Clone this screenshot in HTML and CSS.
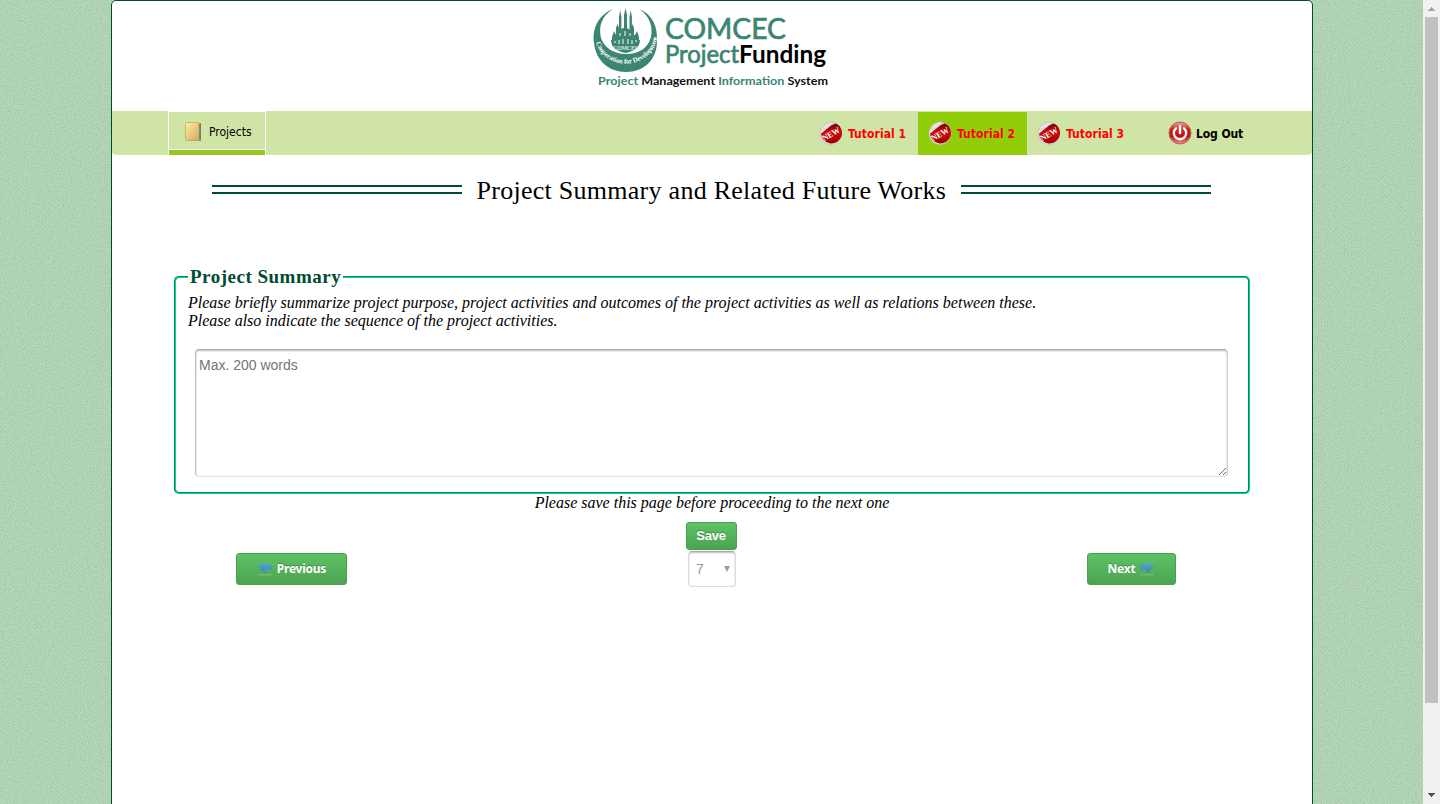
FILE: index.html
```html
<!DOCTYPE html>
<html lang="en">
<head>
<meta charset="utf-8">
<title>COMCEC Project Funding</title>
<link rel="stylesheet" href="styles.css">
</head>
<body>
<svg class="texture" width="1423" height="804" aria-hidden="true">
  <defs>
    <filter id="grain" x="0" y="0" width="100%" height="100%" color-interpolation-filters="sRGB">
      <feTurbulence type="fractalNoise" baseFrequency="0.7" numOctaves="2" seed="8"/>
      <feColorMatrix values="0 0 0 0 .43  0 0 0 0 .65  0 0 0 0 .51  .9 0 0 0 -.38"/>
    </filter>
    <pattern id="weave" width="4" height="4" patternUnits="userSpaceOnUse">
      <path d="M0 3h1v1H0zM1 2h1v1H1zM2 1h1v1H2zM3 0h1v1H3z" fill="#9fc7a7" opacity=".3"/>
    </pattern>
    <symbol id="new-badge" viewBox="0 0 24 24">
      <circle cx="12" cy="12.500" r="11" fill="#f4f0ea" stroke="#b9b5ab" stroke-width=".7"/>
      <path d="M2 12.600C7 9.600 10 4 17 2.600A10.500 10.500 0 1 1 2 12.600z" fill="url(#badge-red)"/>
      <path d="M2 8.500C4 3.500 9 .6 14 .6c-2 5-6 8-12 7.900z" fill="#e4e3e1" stroke="#aaa" stroke-width=".4"/>
      <text x="2.500" y="16" transform="rotate(-30 12 13)" textLength="19" lengthAdjust="spacingAndGlyphs" class="badge-word">NEW</text>
    </symbol>
    <linearGradient id="badge-red" x1="0" y1="0" x2="0" y2="1"><stop offset="0" stop-color="#760000"/><stop offset=".45" stop-color="#d60909"/><stop offset="1" stop-color="#950000"/></linearGradient>
    <linearGradient id="power-red" x1="0" y1="0" x2="0" y2="1"><stop offset="0" stop-color="#f4aaa2"/><stop offset=".3" stop-color="#d22a20"/><stop offset=".65" stop-color="#c01010"/><stop offset="1" stop-color="#f59690"/></linearGradient>
    <linearGradient id="book" x1="0" y1="0" x2="1" y2="1"><stop offset="0" stop-color="#fff0a0"/><stop offset="1" stop-color="#d0a95c"/></linearGradient>
    <linearGradient id="arrow-blue" x1="0" y1="0" x2="0" y2="1"><stop offset="0" stop-color="#5caed0"/><stop offset="1" stop-color="#397ec4"/></linearGradient>
    <symbol id="arrow" viewBox="0 0 16 16">
      <path d="M1 7L8 1V4.500H15V9.500H8V13z" fill="url(#arrow-blue)"/>
      <path d="M1 14h14v1.500H1z" fill="#88b98b" opacity=".65"/>
    </symbol>
  </defs>
  <rect width="1423" height="804" filter="url(#grain)"/>
  <rect width="1423" height="804" fill="url(#weave)"/>
</svg>

<div class="page">
  <header class="brand">
    <svg class="logo" width="240" height="84" viewBox="592 6 240 84" role="img">
      <defs><path id="motto" d="M595 40A31.500 30 0 0 0 657 38V20"/></defs>
      <path d="M613 9C598 15 592 29 594 43C596 61 609 72 626 72C644 72 656 60 657 43C658 26 652 14 639 9C650 16 653 27 651 37C648 48 639 54 626 54C613 54 604 47 601 38C598 26 602 16 613 9z" fill="#3c8572"/>
      <g fill="#3c8572">
        <path d="M619 31V17l1.200-7 1.200 7v14zM624 29V15l1.500-7 1.500 7v14zM629.500 31V17l1.200-7 1.200 7v14z"/>
        <path d="M616 36v-8l1.500-4 1.500 4v3q6-7 12 0v-3l1.500-4 1.500 4v8zM612 37l2-6 2 4h19l2-4 2 6v3h-27z"/>
        <path d="M611 40h29q0 10-14.500 13Q611 50 611 40z"/>
      </g>
      <path d="M615 41v2m4-3v4m4-5v5m5-5v5m4-4v4m4-4v2M620 36v-3m5 3v-5m5 5v-3" stroke="#d9e9e2" stroke-width="1.200"/>
      <text x="613" y="50" class="seal-name" textLength="26">COMCEC</text>
      <text class="motto"><textPath href="#motto" startOffset="3" textLength="84" lengthAdjust="spacingAndGlyphs">Cooperation for Development</textPath></text>
      <text x="665" y="39" class="logo-title" textLength="121" lengthAdjust="spacingAndGlyphs">COMCEC</text>
      <text x="665" y="63" class="logo-project" textLength="74" lengthAdjust="spacingAndGlyphs">Project</text>
      <text x="739" y="63" class="logo-funding" textLength="87" lengthAdjust="spacingAndGlyphs">Funding</text>
      <text x="598" y="85" class="logo-sub" textLength="230" lengthAdjust="spacingAndGlyphs"><tspan class="green">Project</tspan> Management <tspan class="green">Information</tspan> System</text>
    </svg>
  </header>

  <nav class="nav">
    <a class="projects">
      <svg width="18" height="22" viewBox="0 0 18 22"><path d="M14 2h3v18H3" fill="#83906a"/><path d="M15 3h1.500v5H15z" fill="#c5422f"/><path d="M15 8h1.500v5H15z" fill="#35918c"/><path d="M15 13h1.500v5H15z" fill="#51783b"/><rect x="1.500" y="1.500" width="13.500" height="18" rx="1" fill="url(#book)" stroke="#c4ac62" stroke-width=".8"/></svg>
      <span>Projects</span>
    </a>
    <div class="links">
      <a class="link"><svg width="24" height="24"><use href="#new-badge"/></svg><span>Tutorial 1</span></a>
      <a class="link active"><svg width="24" height="24"><use href="#new-badge"/></svg><span>Tutorial 2</span></a>
      <a class="link"><svg width="24" height="24"><use href="#new-badge"/></svg><span>Tutorial 3</span></a>
      <a class="link logout"><svg width="24" height="24" viewBox="0 0 24 24"><circle cx="12" cy="12" r="11" fill="url(#power-red)" stroke="#a9685e" stroke-width="1"/><path d="M8 7.300a6.200 6.200 0 1 0 8 0" fill="none" stroke="#fff" stroke-width="2.400" stroke-linecap="round"/><path d="M12 5v7" stroke="#fff" stroke-width="2.500" stroke-linecap="round"/></svg><span>Log Out</span></a>
    </div>
  </nav>

  <main>
    <div class="heading"><i class="rule"></i><h1>Project Summary and Related Future Works</h1><i class="rule"></i></div>
    <fieldset class="summary">
      <legend>Project Summary</legend>
      <p class="first">Please briefly summarize project purpose, project activities and outcomes of the project activities as well as relations between these.</p>
      <p class="second">Please also indicate the sequence of the project activities.</p>
      <textarea placeholder="Max. 200 words"></textarea>
    </fieldset>
    <p class="notice">Please save this page before proceeding to the next one</p>
    <div class="save-row"><button class="btn save">Save</button></div>
    <div class="pager">
      <button class="btn previous"><svg width="16" height="16"><use href="#arrow"/></svg><span>Previous</span></button>
      <div class="page-select"><span>7</span><svg width="6" height="6" viewBox="0 0 6 6"><path d="M0 0h6L3 6z" fill="#999"/></svg></div>
      <button class="btn next"><span>Next</span><svg class="flip" width="16" height="16"><use href="#arrow"/></svg></button>
    </div>
  </main>
</div>

<aside class="scrollbar" aria-hidden="true">
  <svg width="17" height="17"><path d="M5 10h7v1H5zM6 9h5v1H6zM7 8h3v1H7zM8 7h1v1H8z" fill="#a3a3a3"/></svg>
  <div class="thumb"></div>
  <svg class="down" width="17" height="17"><path d="M5 6h7v1H5zM6 7h5v1H6zM7 8h3v1H7zM8 9h1v1H8z" fill="#505050"/></svg>
</aside>
</body>
</html>
```
FILE: styles.css
```css
* { box-sizing: border-box; }
body { margin: 0; height: 804px; overflow: hidden; display: flex; justify-content: space-between; background: #b7d7b9; font-family: "Liberation Serif", serif; }
.texture { position: absolute; left: 0; top: 0; z-index: -1; }
.badge-word { font: bold 8.500px "Liberation Serif", serif; fill: #fff; }
.page { width: 1202px; height: 824px; margin-left: 111px; background: #fff; border: 1px solid #004c33; border-radius: 5px; flex: none; }

.brand { height: 110px; padding: 5px 0 0 480px; }
.logo { display: block; overflow: visible; }
.logo-title { font: 28px Lato, sans-serif; fill: #3c8572; stroke: #3c8572; stroke-width: .7; }
.logo-project { font: 25px Lato, sans-serif; fill: #3c8572; stroke: #3c8572; stroke-width: .7; }
.logo-funding { font: bold 25px Lato, sans-serif; fill: #000; }
.logo-sub { font: bold 12px Lato, sans-serif; fill: #111; }
.logo-sub .green { fill: #3c8572; }
.seal-name { font: bold 6px "Liberation Serif", serif; fill: #d9e9e2; }
.motto { font: bold 7px "Liberation Serif", serif; fill: #fff; }

.nav { height: 44px; display: flex; justify-content: space-between; padding: 0 56px; background: #d0e4a6; border-radius: 0 0 4px 4px; }
.projects { width: 98px; height: 44px; display: flex; align-items: center; gap: 7px; padding: 0 0 4px 15px; border: 1px solid #fff; border-bottom: 0; font: 12px "DejaVu Sans Condensed", sans-serif; color: #000; background: linear-gradient(#fff, #fff) 0 37px / 100% 1px no-repeat, linear-gradient(#97c81f, #97c81f) 0 38px / 100% 5px no-repeat; }
.links { display: flex; padding-top: 1px; margin-right: -10px; }
.link { width: 109px; height: 43px; padding: 0 0 1px 10px; display: flex; align-items: center; gap: 5px; color: #f00; font: bold 12px "DejaVu Sans Condensed", sans-serif; }
.link svg { flex: none; }
.link span { padding-top: 2px; letter-spacing: .05px; white-space: nowrap; }
.active { background: #92cd0a; }
.logout { width: 108px; margin-left: 22px; color: #000; gap: 4px; }
.logout span { letter-spacing: -.1px; }

.heading { height: 75px; display: flex; justify-content: center; gap: 15px; padding: 20px 2px 0 0; }
.heading h1 { width: 469px; margin: 0; font-weight: 400; font-size: 26px; line-height: 32px; letter-spacing: .27px; white-space: nowrap; }
.rule { width: 250px; height: 9px; margin-top: 10px; border-top: 2px solid #004c33; border-bottom: 2px solid #004c33; }
.summary { width: 1076px; height: 228px; margin: 36px 0 0 62px; padding: 0 12px; border: 2px groove #00da96; border-radius: 5px; }
.summary legend { padding: 0 2px; color: #004c33; font-size: 19px; font-weight: bold; line-height: 22px; letter-spacing: .5px; white-space: nowrap; }
.summary p, .notice { margin: 0; font-size: 16px; font-style: italic; line-height: 18px; white-space: nowrap; }
.summary .first { margin-top: 6px; }
.summary textarea { display: block; width: 1033px; height: 128px; margin: 19px 0 0 7px; padding: 7px 3px; border: 1px solid #ccc; border-color: #aaa #ccc #e5e5e5 #bbb; border-radius: 4px; outline: 0; box-shadow: inset 0 1px 2px #bbb; font: 14px "Liberation Sans", sans-serif; resize: both; }
.summary textarea::placeholder { color: #757575; }
.notice { text-align: center; }
.btn { border: 1px solid #48a14c; border-radius: 3px; background: linear-gradient(#5dc365, #4ca352); box-shadow: inset 0 1px #61bd67; padding: 0; color: #fff; text-shadow: 0 -1px 0 #408a44; font: bold 13px "Liberation Sans", sans-serif; }
.save-row { display: flex; justify-content: center; margin-top: 10px; padding-right: 2px; }
.save { width: 51px; height: 28px; padding-bottom: 2px; letter-spacing: -.2px; }
.pager { display: grid; grid-template-columns: 111px 48px 89px; justify-content: space-between; padding: 1px 136px 0 124px; }
.previous, .next { height: 32px; margin-top: 2px; padding-bottom: 2px; display: flex; align-items: center; justify-content: center; gap: 4px; font: bold 12px "Noto Sans", sans-serif; letter-spacing: -.25px; }
.flip { transform: scaleX(-1); }
.page-select { height: 36px; margin: 0 5px 0 -5px; border: 1px solid #ddd; border-top-color: #aaa; border-radius: 4px; box-shadow: inset 0 1px 2px #bbb; display: flex; justify-content: space-between; padding: 0 5px 0 7px; align-items: center; color: #999; font: 14px "Liberation Sans", sans-serif; }

.scrollbar { width: 17px; height: 804px; background: #f1f1f1; display: flex; flex-direction: column; padding: 0; flex: none; }
.scrollbar svg { display: block; }
.thumb { width: 13px; height: 686px; margin-left: 2px; background: #c1c1c1; }
.down { margin-top: auto; }
```
